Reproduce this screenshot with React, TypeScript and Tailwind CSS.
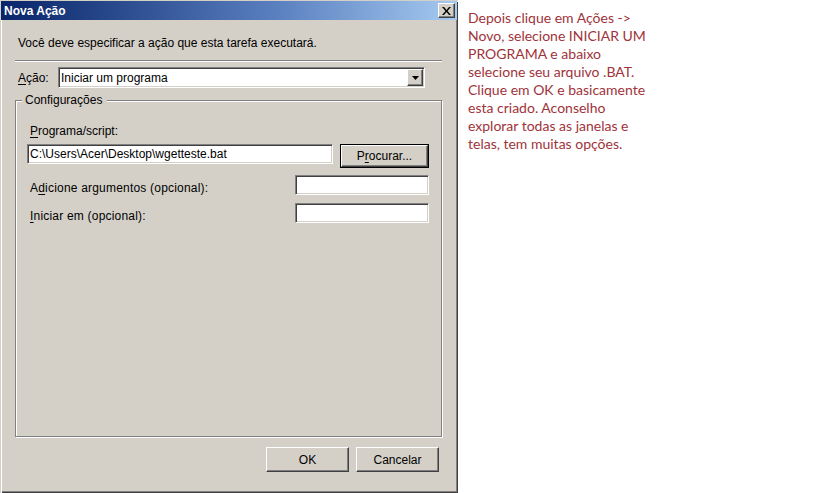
import React from "react";

const sunken =
  "border border-t-[#808080] border-l-[#808080] border-r-white border-b-white shadow-[inset_1px_1px_0_#404040,inset_-1px_-1px_0_#d4d0c8] bg-white";
const raised =
  "border border-t-white border-l-white border-r-[#404040] border-b-[#404040] shadow-[inset_-1px_-1px_0_#808080] bg-[#d4d0c8]";

function U({ children }: { children: React.ReactNode }) {
  return <span className="underline underline-offset-[2px]">{children}</span>;
}

export default function App() {
  return (
    <div className="w-[819px] h-[493px] flex bg-white overflow-hidden font-['Liberation_Sans',Arial,sans-serif] text-[12px] text-black">
      {/* Dialog window */}
      <div className="w-[458px] h-[493px] shrink-0 bg-[#d4d0c8] flex flex-col shadow-[inset_1px_1px_0_#d4d0c8,inset_2px_2px_0_#fff,inset_-1px_-1px_0_#404040,inset_-2px_-2px_0_#808080]">
        {/* Title bar */}
        <div className="mt-[1px] mx-[1px] h-[19px] flex items-center justify-between pl-[3px] pr-[2px] bg-linear-to-r from-[#0a246a] via-[#5a7fbf] via-60% to-[#a6caf0]">
          <span className="text-white font-bold text-[12px] leading-[14px]">Nova Ação</span>
          <div className={`w-[17px] h-[15px] flex items-center justify-center ${raised}`}>
            <svg width="9" height="8" viewBox="0 0 9 8">
              <path d="M0 0h2l2.5 3 2.5-3h2L5.5 4 9 8H7L4.5 5 2 8H0l3.5-4z" fill="#000" />
            </svg>
          </div>
        </div>

        {/* Content */}
        <div className="flex flex-col pl-[15px] pr-[16px]">
          <p className="mt-[16px] pl-[3px] leading-[15px]">
            Você deve especificar a ação que esta tarefa executará.
          </p>
          <div className="mt-[9px] h-[2px] border-t border-t-[#808080] border-b border-b-white" />

          {/* Ação row */}
          <div className="mt-[5px] h-[21px] flex items-center">
            <span className="pl-[3px] w-[43px] leading-[14px]">
              <U>A</U>ção:
            </span>
            <div className={`w-[367px] h-[21px] flex items-center justify-between pl-[2px] pr-[1px] ${sunken}`}>
              <span className="leading-[14px]">Iniciar um programa</span>
              <div className={`w-[16px] h-[17px] flex items-center justify-center ${raised}`}>
                <svg width="7" height="4" viewBox="0 0 7 4">
                  <path d="M0 0h7L3.5 4z" fill="#000" />
                </svg>
              </div>
            </div>
          </div>

          {/* Group box */}
          <div className="mt-[12px] h-[337px] flex flex-col border border-[#808080] shadow-[inset_1px_1px_0_#fff,1px_1px_0_#fff]">
            <span className="-mt-[8px] ml-[6px] pl-[3px] pr-[5px] w-fit bg-[#d4d0c8] leading-[14px]">Configurações</span>

            <span className="mt-[17px] ml-[14px] leading-[14px]">
              <U>P</U>rograma/script:
            </span>
            <div className="mt-[6px] flex items-start">
              <div className={`ml-[11px] w-[306px] h-[20px] flex items-center pl-[2px] ${sunken}`}>
                <span className="leading-[14px]">C:\Users\Acer\Desktop\wgetteste.bat</span>
              </div>
              <div className="ml-[7px] w-[89px] h-[24px] border border-black">
                <div className={`w-full h-full flex items-center justify-center ${raised}`}>
                  <span className="leading-[14px]">
                    P<U>r</U>ocurar...
                  </span>
                </div>
              </div>
            </div>

            <div className="mt-[7px] flex items-start justify-between">
              <span className="mt-[6px] ml-[14px] leading-[14px] tracking-[0.2px]">
                A<U>d</U>icione argumentos (opcional):
              </span>
              <div className={`mr-[12px] w-[134px] h-[20px] ${sunken}`} />
            </div>

            <div className="mt-[8px] flex items-start justify-between">
              <span className="mt-[6px] ml-[14px] leading-[14px] tracking-[0.2px]">
                <U>I</U>niciar em (opcional):
              </span>
              <div className={`mr-[12px] w-[134px] h-[20px] ${sunken}`} />
            </div>
          </div>

          {/* Buttons */}
          <div className="mt-[10px] mr-[3px] flex justify-end gap-[7px]">
            <div className={`w-[83px] h-[25px] flex items-center justify-center ${raised}`}>
              <span className="leading-[14px]">OK</span>
            </div>
            <div className={`w-[83px] h-[25px] flex items-center justify-center ${raised}`}>
              <span className="leading-[14px]">Cancelar</span>
            </div>
          </div>
        </div>
      </div>

      {/* Side note */}
      <div className="pl-[10px] pt-[9px] font-['Lato',sans-serif] text-[14px] leading-[18px] text-[#a0333a] whitespace-nowrap">
        Depois clique em Ações -&gt;
        <br />
        Novo, selecione INICIAR UM
        <br />
        PROGRAMA e abaixo
        <br />
        selecione seu arquivo .BAT.
        <br />
        Clique em OK e basicamente
        <br />
        esta criado. Aconselho
        <br />
        explorar todas as janelas e
        <br />
        telas, tem muitas opções.
      </div>
    </div>
  );
}
